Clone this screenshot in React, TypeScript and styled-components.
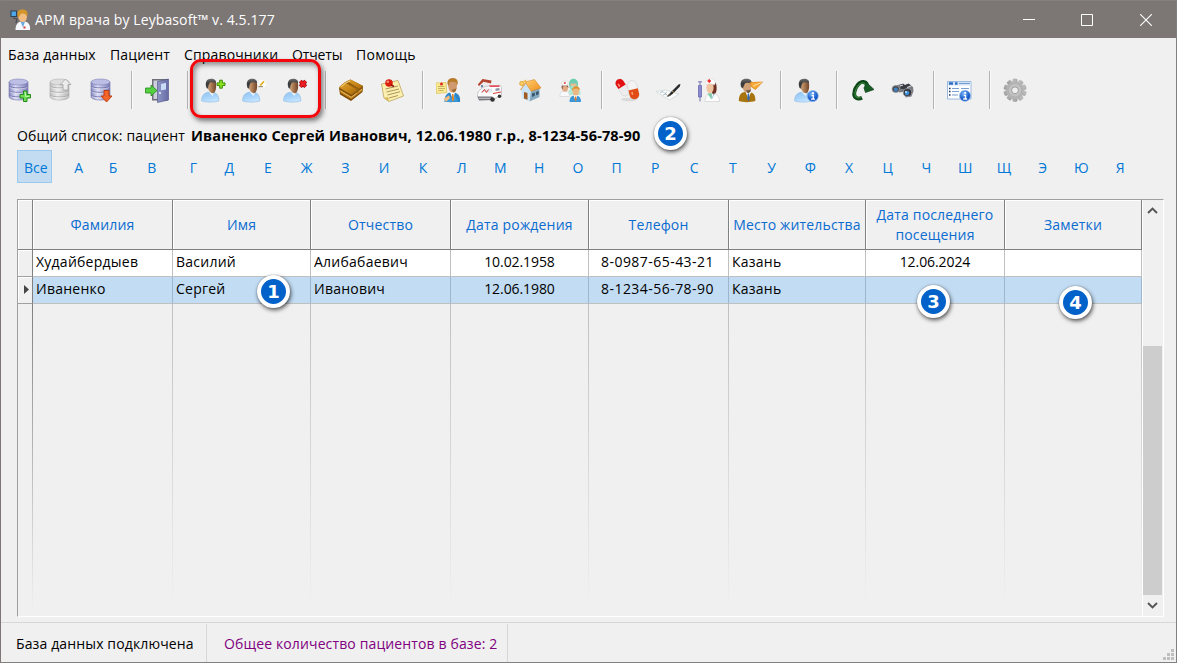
import React from 'react';
import styled, { createGlobalStyle } from 'styled-components';

const GlobalStyle = createGlobalStyle`
  * { box-sizing: border-box; }
  body {
    margin: 0;
    background: #f0f0f0;
    font: 14px/20px "Open Sans", "Noto Sans", sans-serif;
    letter-spacing: 0.16px;
    color: #000;
  }
`;

/* ---------- window frame ---------- */

const Window = styled.div`
  position: relative;
  display: flex;
  flex-direction: column;
  width: 1177px;
  height: 663px;
  overflow: hidden;
  background: #f0f0f0;
  border: 1px solid #838080;
  border-left-color: #7c7675;
`;

const TitleBar = styled.header`
  display: flex;
  align-items: center;
  flex: none;
  height: 37px;
  margin: 0 -1px;
  padding-left: 10px;
  background: #7c7675;
  color: #fff;
`;

const Title = styled.h1`
  flex: 1;
  margin: 0 0 0 3px;
  font-size: 14px;
  font-weight: 400;
  letter-spacing: 0.1px;
`;

const Caption = styled.button`
  display: grid;
  place-items: center;
  width: 58px;
  height: 36px;
  padding: 0;
  border: 0;
  background: none;
  color: #fff;

  &:last-child { padding-left: 2px; }
`;

const Captions = styled.div`
  display: flex;
  margin-right: 3px;
`;

const MenuBar = styled.nav`
  display: flex;
  flex: none;
  height: 33px;
  padding: 7px 0 0 7px;
`;

const MenuItem = styled.span<{ $width: number; $spacing?: number }>`
  width: ${p => p.$width}px;
  white-space: nowrap;
  letter-spacing: ${p => p.$spacing ?? 0.15}px;
`;

/* ---------- toolbar ---------- */

const Toolbar = styled.div`
  display: flex;
  flex: none;
  align-items: center;
  height: 38px;
  margin-left: -2px;
`;

const ToolButton = styled.button`
  flex: none;
  width: 41px;
  height: 38px;
  padding: 1px 0 0 8px;
  border: 0;
  background: none;
  text-align: left;

  svg { display: block; }
`;

const Divider = styled.i`
  flex: none;
  width: 2px;
  height: 38px;
  margin: 0 4px 0 9px;
  border-left: 1px solid #b4b4b4;
  border-right: 1px solid #fbfbfb;
`;

/* ---------- patient line and alphabet ---------- */

const Summary = styled.p`
  display: flex;
  flex: none;
  height: 41px;
  margin: 0;
  padding: 17px 0 0 16px;
  white-space: pre;
`;

const SummaryLabel = styled.span`
  width: 174px;
`;

const SummaryName = styled.b`
  font-size: 14.5px;
  letter-spacing: 0.13px;
`;

const Alphabet = styled.div`
  display: flex;
  flex: none;
  height: 33px;
  margin-left: 16px;
  color: #0078d7;
`;

const AllLetters = styled.span`
  width: 35px;
  margin-right: 3px;
  padding-left: 6px;
  line-height: 33px;
  border: 1px solid #99c9ef;
  background: #c4dcf2;
  letter-spacing: 0;
`;

const Letter = styled.span<{ $shift?: number }>`
  width: 38.74px;
  padding-left: ${p => p.$shift ?? 0}px;
  line-height: 35px;
  text-align: center;
`;

/* ---------- grid ---------- */

const GridFrame = styled.section`
  display: flex;
  flex: none;
  width: 1147px;
  height: 418px;
  margin: 16px 0 0 16px;
  border: 1px solid #fff;
  border-top-color: #a0a0a0;
  border-left-color: #a0a0a0;
`;

const Sheet = styled.div`
  display: grid;
  flex: none;
  grid-template-columns: 15px 140px 138px 140px 138px 140px 137px 139px 137px;
  grid-template-rows: 50px 27px 27px 1fr;
  width: 1124px;
`;

const HeadCell = styled.div`
  display: flex;
  align-items: center;
  justify-content: center;
  border-right: 1px solid #808080;
  border-bottom: 1px solid #808080;
  box-shadow: inset 1px 1px 0 #fff;
  color: #0a6cd0;
  text-align: center;
  white-space: pre;
  letter-spacing: 0.17px;
  padding-top: 1px;
`;

const RowMark = styled.div`
  display: flex;
  align-items: center;
  justify-content: flex-end;
  padding: 0 3px 1px 0;
  border-right: 1px solid #808080;
  border-bottom: 1px solid #a0a0a0;
  box-shadow: inset 1px 1px 0 #fff;
`;

const Cell = styled.div<{ $selected?: boolean; $center?: boolean }>`
  padding: 2px 0 0 ${p => (p.$center ? 0 : 3)}px;
  text-align: ${p => (p.$center ? 'center' : 'left')};
  white-space: nowrap;
  letter-spacing: 0.24px;
  background: ${p => (p.$selected ? '#c2dcf3' : '#fff')};
  border-right: 1px solid ${p => (p.$selected ? '#9db6cc' : '#c0c0c0')};
  border-bottom: 1px solid #c0c0c0;
`;

const Phone = styled.span`
  margin-right: 2px;
  letter-spacing: 0.46px;
`;

const DateText = styled.span`
  letter-spacing: -0.08px;
`;

const Tail = styled.div<{ $mark?: boolean }>`
  background: linear-gradient(${p => (p.$mark ? '#808080' : '#c0c0c0')}, #f0f0f0 98%) right / 1px 100% no-repeat;
`;

const ScrollBar = styled.div`
  display: flex;
  flex-direction: column;
  align-items: center;
  width: 21px;
  border-left: 1px solid #fff;
  padding-right: 1px;
`;

const ScrollArrow = styled.button<{ $height: number }>`
  display: grid;
  place-items: center;
  flex: none;
  width: 19px;
  height: ${p => p.$height}px;
  padding: 1px 0 0;
  border: 0;
  background: none;
`;

const ScrollTrack = styled.div`
  flex: 1;
  display: flex;
  flex-direction: column;
  justify-content: flex-end;
  width: 19px;
`;

const ScrollThumb = styled.div`
  height: 249px;
  background: #cdcdcd;
`;

/* ---------- status bar ---------- */

const StatusBar = styled.footer`
  display: flex;
  flex: none;
  height: 40px;
  margin-top: 5px;
  padding-top: 1px;
  border-top: 1px solid #d7d7d7;
`;

const StatusPanel = styled.div<{ $width: number; $indent: number; $color?: string }>`
  width: ${p => p.$width}px;
  padding-left: ${p => p.$indent}px;
  border-right: 1px solid #d7d7d7;
  line-height: 39px;
  white-space: nowrap;
  letter-spacing: 0.13px;
  color: ${p => p.$color ?? '#000'};
`;

const Grip = styled.svg`
  margin: 25px 2px 0 auto;
`;

/* ---------- annotations over the window ---------- */

const Highlight = styled.div`
  position: absolute;
  left: 189px;
  top: 58px;
  width: 131px;
  height: 59px;
  border: 3px solid #f4070c;
  border-radius: 11px;
  box-shadow: 2px 3px 5px rgba(0, 0, 0, 0.5), inset 2px 3px 5px rgba(0, 0, 0, 0.4);
`;

const Marker = styled.span<{ $x: number; $y: number }>`
  position: absolute;
  left: ${p => p.$x - 18}px;
  top: ${p => p.$y - 18}px;
  width: 33px;
  height: 33px;
  border: 4px solid #fff;
  border-radius: 50%;
  background: #0262c9;
  box-shadow: 1px 2px 4px rgba(0, 0, 0, 0.65), 0 0 1px rgba(0, 0, 0, 0.5);
  color: #fff;
  font: bold 18px/25px "DejaVu Sans", sans-serif;
  letter-spacing: 0;
  text-align: center;
`;

/* ---------- icons ---------- */

const Icon = ({ children }: { children: React.ReactNode }) => (
  <svg width="25" height="25" viewBox="0 0 25 25" fill="none">{children}</svg>
);

const Definitions = styled.svg`
  position: absolute;
  width: 0;
  height: 0;
`;

const Gradients = () => (
  <Definitions>
    <defs>
      <linearGradient id="db"><stop stopColor="#8587c0" /><stop offset=".35" stopColor="#dcddf6" /><stop offset="1" stopColor="#797bb5" /></linearGradient>
      <linearGradient id="dbGray"><stop stopColor="#bdbdbd" /><stop offset=".4" stopColor="#ededed" /><stop offset="1" stopColor="#b2b2b2" /></linearGradient>
      <linearGradient id="coat" x1="0" y1="0" x2="0.400" y2="1"><stop stopColor="#8fc3f0" /><stop offset=".6" stopColor="#a9d4fa" /><stop offset="1" stopColor="#c4e4ff" /></linearGradient>
      <linearGradient id="face"><stop stopColor="#dcb38c" /><stop offset=".5" stopColor="#a87850" /><stop offset="1" stopColor="#70452a" /></linearGradient>
      <linearGradient id="hair" x1="0" y1="0" x2="0" y2="1"><stop stopColor="#6d6d6d" /><stop offset=".5" stopColor="#383838" /><stop offset="1" stopColor="#4a4a4a" /></linearGradient>
      <linearGradient id="door"><stop stopColor="#8f96c6" /><stop offset="1" stopColor="#666ca4" /></linearGradient>
      <linearGradient id="gold" x1="0" y1="0" x2="1" y2="1"><stop stopColor="#e6ae3e" /><stop offset=".5" stopColor="#c98717" /><stop offset="1" stopColor="#8f5707" /></linearGradient>
      <linearGradient id="roof" x1="0" y1="0" x2="1" y2="1"><stop stopColor="#ffcf70" /><stop offset="1" stopColor="#ee8e1c" /></linearGradient>
      <radialGradient id="info" cx=".4" cy=".3"><stop stopColor="#7db8fa" /><stop offset="1" stopColor="#1759c8" /></radialGradient>
      <linearGradient id="steel" x1="0" y1="0" x2="1" y2="1"><stop stopColor="#c4c4c4" /><stop offset="1" stopColor="#9c9c9c" /></linearGradient>
    </defs>
  </Definitions>
);

const Cylinder = ({ gray }: { gray?: boolean }) => {
  const line = gray ? '#a9a9a9' : '#7072a8';
  return (
    <>
      <path d="M2 4v14.500c0 2.300 4.200 3.500 9.500 3.500s9.500-1.200 9.500-3.500V4z" fill={gray ? 'url(#dbGray)' : 'url(#db)'} stroke={line} strokeWidth=".6" />
      <path d="M2 8c1.500 2.500 17.500 2.500 19 0M2 12.500c1.500 2.500 17.500 2.500 19 0M2 17c1.500 2.500 17.500 2.500 19 0" stroke={line} strokeWidth=".9" />
      <path d="M2.500 9.200c2 2.200 16 2.200 18 0M2.500 13.700c2 2.200 16 2.200 18 0M2.500 18.200c2 2.200 16 2.200 18 0" stroke="#fff" strokeOpacity=".5" strokeWidth=".8" />
      <ellipse cx="11.500" cy="4" rx="9.500" ry="3" fill={gray ? '#dedede' : '#bcbee6'} stroke={line} strokeWidth=".5" />
    </>
  );
};

const DbAddIcon = () => (
  <Icon>
    <Cylinder />
    <path d="M16.500 13h3.500v3.500h3.500V20H20v3.500h-3.500V20H13v-3.500h3.500z" fill="#6fdc55" stroke="#22891b" strokeWidth="1" />
    <path d="M17.500 14.500h1v4h4" stroke="#cbffba" strokeWidth=".8" />
  </Icon>
);

const DbUploadIcon = () => (
  <Icon>
    <Cylinder gray />
    <path d="M17.500 1l5.500 5.500h-3V12h-5V6.500h-3z" fill="#ececec" stroke="#a9a9a9" strokeWidth=".9" />
  </Icon>
);

const DbDownloadIcon = () => (
  <Icon>
    <Cylinder />
    <path d="M15 12.500h5V18h3l-5.500 6L12 18h3z" fill="#f4652a" stroke="#bb3508" strokeWidth=".9" />
  </Icon>
);

const DoorIcon = () => (
  <Icon>
    <path d="M7 1h16v21.500H7z" fill="#6e6f78" />
    <path d="M8.500 2.500H20v18.500H8.500z" fill="#cdd0dc" />
    <path d="M12.500 3.500L23.500 1v21l-11 2.500z" fill="url(#door)" stroke="#4b5080" strokeWidth=".6" />
    <path d="M16 6l5-1.200v6.700l-5 .800z" fill="#c9dcf6" />
    <circle cx="15" cy="15" r="1.100" fill="#e8edf8" />
    <path d="M.5 10h5.500V7l6 5.500-6 5.500v-3H.5z" fill="#55d040" stroke="#26881d" strokeWidth=".8" />
  </Icon>
);

const Person = () => (
  <>
    <path d="M.6 23c0-5.500 2.400-8 6.400-8.800l4 1.300 2.500-.8c3 1 4.500 4 4.300 8.300-4.500 1.500-12.500 1.500-17.200 0z" fill="url(#coat)" stroke="#7fb2e0" strokeWidth=".5" />
    <path d="M8 14.500l3.500 3.500 1.500-3z" fill="#e9f4fe" />
    <path d="M6 5c1-3 8.500-3.500 9 .5.500 4.500-.5 9.500-3 9.700C8.500 15.200 5.500 10 6 5z" fill="url(#face)" />
    <path d="M5.500 10C3.500 4 6 .8 10.200.8c3.300 0 5.300 1.700 4.800 4.200-2.500-.8-4.800-.8-6.200-.2-1 1.200-1.600 3.200-1.600 6z" fill="url(#hair)" />
  </>
);

const PersonAddIcon = () => (
  <Icon>
    <Person />
    <path d="M18.700 2.200h2.600v2.700H24v2.600h-2.700v2.700h-2.600V7.500H16V4.900h2.700z" fill="#8be71c" stroke="#3c8a0b" strokeWidth="1" />
  </Icon>
);

const PersonEditIcon = () => (
  <Icon>
    <Person />
    <circle cx="20" cy="6" r="4.300" fill="#fbfbf8" />
    <path d="M18.200 7.500L22 3.200" stroke="#e8ad28" strokeWidth="1.700" />
    <path d="M16.500 8.700h4.500" stroke="#77664a" strokeWidth=".9" />
  </Icon>
);

const PersonDeleteIcon = () => (
  <Icon>
    <Person />
    <path d="M17.300 3.200l5.400 5.400M22.700 3.200l-5.400 5.400" stroke="#8d0b0b" strokeWidth="4" />
    <path d="M17.300 3.200l5.400 5.400M22.700 3.200l-5.400 5.400" stroke="#ed1c24" strokeWidth="2.600" />
  </Icon>
);

const BookIcon = () => (
  <Icon>
    <path d="M0 9.500Q5 4 11.500 1.500L24 8l-.5 6L12 23 1 16.500z" fill="#7b4a06" />
    <path d="M0 9.500Q5 4 11.500 1.500L24 8 12.500 17z" fill="url(#gold)" />
    <path d="M1 11.500l11.300 7L23.500 10v2.700l-11.300 8.600L1.500 15z" fill="#b97a17" />
    <path d="M1.500 13l10.700 6.300L23 11.200" stroke="#efc873" strokeWidth=".8" />
    <path d="M6.500 5l11 6.200v4.300l2.200-1.700v-3.500L9 3.500z" fill="#96600d" />
    <path d="M2.500 8.500Q6 5 11 3" stroke="#f8d88b" strokeWidth="1" />
  </Icon>
);

const NoteIcon = () => (
  <Icon>
    <path d="M1.500 6L18 2.500 23.500 18 9 23.500 4 20z" fill="#fbf0ae" stroke="#b39a4b" strokeWidth=".7" />
    <path d="M5.500 11l12.500-3M6.500 14l12.500-3M7.500 17l12.500-3.300M9 20l9-2.500" stroke="#a08b50" strokeWidth=".9" />
    <path d="M4 20l4-1 1 4.500z" fill="#d7b75b" />
    <circle cx="9" cy="5" r="3.800" fill="#d9200f" />
    <circle cx="7.800" cy="3.700" r="1.300" fill="#fa8b78" />
    <path d="M11 7l3 1.500" stroke="#8d1108" strokeWidth="1.400" />
  </Icon>
);

const DoctorNoteIcon = () => (
  <Icon>
    <path d="M8.500 24c0-6 2-9 6-9.500h4c4 1 6 4 5.500 9.500z" fill="#2b86c9" />
    <path d="M9 23.500l3-7 4.500 5-1 3zM22 24l-3-7-2.500 6z" fill="#3f9cdb" />
    <path d="M14 14h5l-2 8z" fill="#fff" />
    <path d="M16 16h1.500l.6 5-1.300 3-1-3z" fill="#e4862a" />
    <path d="M12 5c0-4 9-4 9 0 .5 5-1.500 9.500-4.500 9.500S12 10 12 5z" fill="#cf9a70" />
    <path d="M11.500 6C11 2 13.500 0 17 0c4 0 5.500 3 4.500 7-1-3-4-4-7.500-3-.5 1-1 2-1 4z" fill="#b87d2c" />
    <path d="M16 11.500c2 0 4-.5 4.500-2 0 3-1.500 5-3.500 5z" fill="#9c692e" />
    <path d="M0 5l10-.5.800 10L.500 15.500z" fill="#fbec92" stroke="#d5b746" strokeWidth=".6" />
    <path d="M2 8.500h6.500M2 10.500h7M2.500 12.500h5" stroke="#b09a55" strokeWidth=".7" />
    <circle cx="5.500" cy="6" r="1.500" fill="#df2a1f" />
    <path d="M8 20.500l5-3 1 2.500-4 4z" fill="#f0bb7d" />
  </Icon>
);

const AmbulanceIcon = () => (
  <Icon>
    <path d="M2 5.500L6 1l7 2-1.500 7L3 10.500z" fill="#eeebea" />
    <path d="M.8 6.500L5.500 1l9 1.500-.5 3L6.500 3.800 2 8z" fill="#b4442f" />
    <path d="M4 7h2v2.500H4z" fill="#7289a8" />
    <path d="M1 14l4.500-4.500L11 8l12-.5c1 0 1.500 1.500 1.500 3.500v6.500L16 21.500 2 20.500.5 18z" fill="#fdfdfd" stroke="#b5b5ba" strokeWidth=".7" />
    <path d="M.5 18.500h15V22L2 22.500z" fill="#77777f" />
    <path d="M2 20.300h12" stroke="#c8c8cc" strokeWidth="1" />
    <path d="M5.500 10.500H15l1 4H3.500z" fill="#e3e8ee" />
    <path d="M5 14.500l2.500-3 2 3 2-3M16 15.500l8-1.500" stroke="#d63631" strokeWidth="1" />
    <path d="M12 7.500h10.500v1.200H13z" fill="#e51b2d" />
    <path d="M18.500 10.500l4-.5v2.500l-4 .5z" fill="#8c97a4" />
    <circle cx="15.500" cy="21.500" r="2.300" fill="#333" /><circle cx="22.500" cy="18.200" r="1.800" fill="#333" />
  </Icon>
);

const HouseIcon = () => (
  <Icon>
    <path d="M12 13l9.500-3.500V19l-10 4.500z" fill="#87a9c0" />
    <path d="M3 11l5-7 5 9-1.500 10.500-7-3z" fill="#cbe4f5" />
    <path d="M7 4l9.500-2.500L23 10l-9.800 3.200z" fill="url(#roof)" stroke="#cd7c18" strokeWidth=".5" />
    <path d="M8 4.500L2.500 12" stroke="#e0a458" strokeWidth="1.200" />
    <path d="M6 14l3.500 1v6.800L6 20.500z" fill="#a05c22" />
    <path d="M14 15.500l2.800-1v3.300L14 19zM18 14l2.700-1v3.300l-2.700 1z" fill="#37566e" />
    <circle cx="3.800" cy="5.500" r="2.200" fill="#f8cc62" stroke="#d59c28" strokeWidth=".7" />
    <path d="M5 3l3.500-1.500L7.500 5z" fill="#f4ba43" />
  </Icon>
);

const StaffIcon = () => (
  <Icon>
    <path d="M9.500 13c1-3 11-3 12 1v3h-12z" fill="#b6e8d6" />
    <path d="M10 6c0-7 9-7 9 0 0 3-1.500 6-4.500 6S10 9 10 6z" fill="#6dcdb0" />
    <path d="M11.500 5.500h6V8h-6z" fill="#e5bd97" />
    <path d="M11.500 8h6c0 2-1 3.500-3 3.500S11.500 10 11.500 8z" fill="#a3e6d0" />
    <path d="M.8 18.500c0-4 2-5.500 5-5.500s4.700 1.500 4.700 5.500z" fill="#f7f9fb" stroke="#c9ced4" strokeWidth=".6" />
    <ellipse cx="6" cy="9.500" rx="3" ry="4.300" fill="#e1aa84" />
    <path d="M2.500 10c-.5-6 7-6 7 0C8 7.500 5 7.500 4 8.500l-.5 3z" fill="#8e6048" />
    <path d="M2.500 4.500c1.500-2 5-2 6.500 0L8.500 7.500h-5z" fill="#fff" stroke="#c8c8c8" strokeWidth=".5" />
    <path d="M4.800 5h2" stroke="#df282f" strokeWidth="1.500" />
    <path d="M10.500 24c0-4 1.500-6.500 5.500-6.500 4.500 0 6 2.500 6 6.500z" fill="#3c97d8" />
    <path d="M14.500 17h4l-2 6z" fill="#fff" /><path d="M16 18.500h1.200l.4 3-1 2-.9-2z" fill="#df7a28" />
    <ellipse cx="16.800" cy="13" rx="3.200" ry="4.500" fill="#ebb883" />
    <path d="M13 13c-.5-6 8-6.500 8-.500-2-2.500-5-2.500-6.500-1.500z" fill="#e0902c" />
  </Icon>
);

const PillsIcon = () => (
  <Icon>
    <ellipse cx="14" cy="21.500" rx="8" ry="1.800" fill="#ccc" opacity=".6" />
    <g transform="rotate(-32 5 6)">
      <rect x="1" y="1" width="8.500" height="18.500" rx="4.250" fill="#ededed" stroke="#cfcfcf" strokeWidth=".5" />
      <path d="M1 9.500V5.200a4.250 4.250 0 018.500 0v4.300z" fill="#e31212" />
      <path d="M3.500 8V5" stroke="#ff8f85" strokeWidth="1.500" />
    </g>
    <g transform="rotate(-14 18 12)">
      <rect x="13.500" y="2.500" width="9.500" height="19" rx="4.750" fill="#f3f3f3" stroke="#ccc" strokeWidth=".5" />
      <path d="M13.500 11.500H23v5.200a4.750 4.750 0 01-9.500 0z" fill="#e24b13" />
      <path d="M16.500 13.500v3" stroke="#ff9f73" strokeWidth="1.500" />
    </g>
  </Icon>
);

const PenIcon = () => (
  <Icon>
    <path d="M0 13.500l9-1.500 14 4-9.500 6z" fill="#fff" stroke="#bcd0cc" strokeWidth=".6" />
    <path d="M4 14.500l3-1 2 2 2-1M7 17l3-1 2 2.500 3-1.500" stroke="#8aa3b0" strokeWidth=".7" />
    <path d="M11.500 18.500l3-4 8-8 2-.5-.8 2.800-7.700 7.700z" fill="#292b2d" />
    <path d="M10.500 19l2.800-3.500 1.700 1.700z" fill="#57503c" />
    <path d="M16 13l2.300 1.700" stroke="#bfa05c" strokeWidth=".9" />
  </Icon>
);

const NurseIcon = () => (
  <Icon>
    <path d="M1.500 7.500h3v11.500h-3z" fill="#8a8ad0" stroke="#5f5fa8" strokeWidth=".7" />
    <path d="M3 4v3M1 3.800h4M3 19v4.500" stroke="#7474ae" strokeWidth="1" />
    <path d="M8 23.500c0-5 2.500-8 7-8s7.500 2.500 7.500 8z" fill="#fdfdfd" stroke="#c9c9c9" strokeWidth=".6" />
    <path d="M10.500 15.500h4.500l-.5 6z" fill="#77ce92" />
    <path d="M10 7c0-6 9-6 9.500 1 .3 4 .3 8-3.500 8.500-1-3-3-5-2-9z" fill="#6e3020" />
    <ellipse cx="13" cy="9.500" rx="3.600" ry="5.700" fill="#f2c5a2" />
    <path d="M8.500 4C9.500-.5 17-.5 18.500 4L17.500 7c-3-1.500-5-1.500-8-.5z" fill="#fff" stroke="#d4d4d4" strokeWidth=".5" />
    <path d="M10.500 3h3.500M12.250 1.200v3.600" stroke="#ea2323" strokeWidth="1.500" />
    <path d="M13 15.500l2 5 2.500-5.500" stroke="#8bbddb" strokeWidth=".8" />
  </Icon>
);

const HeraldIcon = () => (
  <Icon>
    <path d="M.8 23c0-6 2-8.500 6-9h5c4 1 6 3.500 5.500 9-5 1.500-12 1.500-16.500 0z" fill="#a8740f" />
    <path d="M7.500 14l3 7 2.500-7z" fill="#fff" />
    <path d="M9.700 15.500h1.400l.7 5-1.400 3-1.200-3z" fill="#356ab4" />
    <path d="M4.500 7c0-6 8.500-6 8.500 0s-1.500 7.500-4 7.500S4.500 12 4.500 7z" fill="#cf9f76" />
    <path d="M3 9C1.500 3 4.500.8 8 .8c4.500 0 6 2 5.500 4.700-3-1-5-1-6.500-.2L4.800 10.500z" fill="url(#hair)" />
    <path d="M8 12c2 .7 4 .2 5-1 0 3-2 4.500-3.500 4z" fill="#6d543f" />
    <path d="M12 4.500l12.500-.500-7 7.500-4-2.500z" fill="#f7a836" stroke="#dc8413" strokeWidth=".7" />
    <path d="M23.500 4.500L15 8" stroke="#ffdd9c" strokeWidth="1" />
  </Icon>
);

const InfoBall = ({ cx, cy }: { cx: number; cy: number }) => (
  <>
    <circle cx={cx} cy={cy} r="5.500" fill="url(#info)" stroke="#8cb8ea" strokeWidth=".7" />
    <path d={`M${cx - 1.300} ${cy - 0.500}h1.800v3.500M${cx - 1.800} ${cy + 3.200}h4`} stroke="#fff" strokeWidth="1.300" />
    <circle cx={cx + 0.200} cy={cy - 2.900} r="1.100" fill="#fff" />
  </>
);

const PersonInfoIcon = () => <Icon><Person /><InfoBall cx={18.800} cy={18} /></Icon>;

const RefreshIcon = () => (
  <Icon>
    <path d="M12 19.800c-4.500 2.200-8.500-.3-7.700-5.300C5 9 9.500 3.500 13.500 4c3.200.4 4 3 3.800 6.500" stroke="#0d4517" strokeWidth="3.800" />
    <path d="M11 19.500c-4 1.200-6.500-.8-6-4.800C5.700 9.500 9.800 4.500 13 4.800c2.400.3 3.200 2.200 3.200 4.700" stroke="#35803a" strokeWidth="1.200" />
    <path d="M16.500 4.500l7.500 7-8.500 3-1.500-4.500z" fill="#175c25" stroke="#0c3b15" strokeWidth=".7" />
  </Icon>
);

const BinocularsIcon = () => (
  <Icon>
    <path d="M2 8.500l8-2.500 3 1.500 5-1.500 4 3 .5 4-2 5.500-6 1-1-6-5 1z" fill="#7a7b80" />
    <path d="M10 6.500l2-1 2 1.500 3.500-1.500 2.500 2-6 4-5-1z" fill="#3a3b40" />
    <path d="M9 8l3-1M16 9.500l4-1.500" stroke="#d6d7dc" strokeWidth="1.200" />
    <ellipse cx="4.800" cy="11" rx="3.800" ry="3.500" fill="#4a4b50" stroke="#a0a2a8" strokeWidth=".8" />
    <circle cx="4.800" cy="11.500" r="1.900" fill="#3b83c9" />
    <ellipse cx="16.500" cy="14.500" rx="4.300" ry="3.900" fill="#35363b" stroke="#a0a2a8" strokeWidth=".8" />
    <ellipse cx="16" cy="15" rx="2.300" ry="2.200" fill="#3c8dd9" />
    <circle cx="15" cy="14" r=".9" fill="#d2e9ff" />
  </Icon>
);

const ReportIcon = () => (
  <Icon>
    <path d="M.5 3.500h23.500v17.500H.5z" fill="#fdfeff" stroke="#83a8d7" strokeWidth=".8" />
    <path d="M1 4h23v3.500H1z" fill="#d3e3f7" />
    <path d="M2 5.500h4M8 5.500h2.500" stroke="#2c6ec4" strokeWidth="2.500" />
    <path d="M12 5.500h11M5 10.500h7M14 10.500h8M5 13.500h7M14 13.500h6M5 17h6" stroke="#6a93cb" strokeWidth=".9" />
    <path d="M2 10.500h1.500M2 13.500h1.500M2 17h1.500" stroke="#1d3255" strokeWidth="1.600" />
    <InfoBall cx={18} cy={17.800} />
  </Icon>
);

const GearIcon = () => (
  <Icon>
    {[0, 36, 72, 108, 144].map(angle => (
      <rect key={angle} x="9.800" y="1" width="4.400" height="22.500" rx="1" fill="url(#steel)" stroke="#a3a3a3" strokeWidth=".5" transform={`rotate(${angle} 12 12.300)`} />
    ))}
    <circle cx="12" cy="12.300" r="8.700" fill="#b4b4b4" />
    <circle cx="12" cy="12.300" r="6.700" fill="#c2c2c2" stroke="#aaa" strokeWidth=".6" />
    <circle cx="12" cy="12.300" r="3.400" fill="#efefef" stroke="#a0a0a0" strokeWidth="1" />
  </Icon>
);

const AppIcon = () => (
  <svg width="22" height="22" viewBox="0 0 22 22" fill="none">
    <path d="M1 2h5.500v5.500H1z" fill="#4fa8e8" stroke="#2a4258" strokeWidth="1.100" />
    <path d="M3 9l4 1-1 4" stroke="#4a4a50" strokeWidth="1.200" />
    <path d="M5.500 21c0-5 2-8 6-8.500h3.500c4 1 5.500 4 5 8.500z" fill="#f5f8fc" />
    <path d="M10.500 12.500h4.500l-2 6z" fill="#69a9e0" />
    <path d="M8 6c0-6 9-6 9 0s-2 7-4.500 7S8 10 8 6z" fill="#f2bc82" />
    <path d="M7.500 6.500C7 2 9 .5 12.500.5c4 0 6 2.500 4.500 7-1.500-3-4-3.500-6-2.500L8.500 8.500z" fill="#d3962a" />
    <path d="M13.500 17.500h2v2h-2z" fill="#dc3636" />
  </svg>
);

/* ---------- data ---------- */

const toolGroups = [
  [DbAddIcon, DbUploadIcon, DbDownloadIcon],
  [DoorIcon],
  [PersonAddIcon, PersonEditIcon, PersonDeleteIcon],
  [BookIcon, NoteIcon],
  [DoctorNoteIcon, AmbulanceIcon, HouseIcon, StaffIcon],
  [PillsIcon, PenIcon, NurseIcon, HeraldIcon],
  [PersonInfoIcon],
  [RefreshIcon, BinocularsIcon],
  [ReportIcon],
  [GearIcon],
];

const letters = 'АБВГДЕЖЗИКЛМНОПРСТУФХЦЧШЩЭЮЯ'.split('');
const letterShift: Record<string, number> = { А: 9, Г: 6 };

const columns = ['Фамилия', 'Имя', 'Отчество', 'Дата рождения', 'Телефон', 'Место жительства', 'Дата последнего\nпосещения', 'Заметки'];

const patients = [
  { last: 'Худайбердыев', first: 'Василий', middle: 'Алибабаевич', born: '10.02.1958', phone: '8-0987-65-43-21', city: 'Казань', visit: '12.06.2024', notes: '' },
  { last: 'Иваненко', first: 'Сергей', middle: 'Иванович', born: '12.06.1980', phone: '8-1234-56-78-90', city: 'Казань', visit: '', notes: '', selected: true },
];

const markers = [
  { n: 1, x: 274, y: 292 },
  { n: 2, x: 671, y: 134 },
  { n: 3, x: 934, y: 302 },
  { n: 4, x: 1076, y: 303 },
];

export default function App() {
  return (
    <Window>
      <GlobalStyle />
      <Gradients />
      <TitleBar>
        <AppIcon />
        <Title>АРМ врача by Leybasoft™ v. 4.5.177</Title>
        <Captions>
          <Caption><svg width="12" height="12"><path d="M0 5.500h12" stroke="currentColor" /></svg></Caption>
          <Caption><svg width="12" height="12"><path d="M.5.500h11v11H.5z" fill="none" stroke="currentColor" /></svg></Caption>
          <Caption><svg width="12" height="12"><path d="M0 0l12 12M12 0L0 12" stroke="currentColor" strokeWidth="1.100" /></svg></Caption>
        </Captions>
      </TitleBar>

      <MenuBar>
        <MenuItem $width={102}>База данных</MenuItem>
        <MenuItem $width={74}>Пациент</MenuItem>
        <MenuItem $width={108}>Справочники</MenuItem>
        <MenuItem $width={64} $spacing={-0.15}>Отчеты</MenuItem>
        <MenuItem $width={64} $spacing={0.3}>Помощь</MenuItem>
      </MenuBar>

      <Toolbar>
        {toolGroups.map((group, g) => (
          <React.Fragment key={g}>
            {g > 0 && <Divider />}
            {group.map((Tool, i) => <ToolButton key={i}><Tool /></ToolButton>)}
          </React.Fragment>
        ))}
      </Toolbar>

      <Summary>
        <SummaryLabel>Общий список: пациент</SummaryLabel>
        <SummaryName>Иваненко Сергей Иванович, 12.06.1980 г.р., 8-1234-56-78-90</SummaryName>
      </Summary>

      <Alphabet>
        <AllLetters>Все</AllLetters>
        {letters.map(l => <Letter key={l} $shift={letterShift[l]}>{l}</Letter>)}
      </Alphabet>

      <GridFrame>
        <Sheet>
          <HeadCell />
          {columns.map(c => <HeadCell key={c}>{c}</HeadCell>)}
          {patients.map(p => (
            <React.Fragment key={p.last}>
              <RowMark>
                {p.selected && <svg width="5" height="9"><path d="M0 0l5 4.500L0 9z" fill="#444" /></svg>}
              </RowMark>
              <Cell $selected={p.selected}>{p.last}</Cell>
              <Cell $selected={p.selected}>{p.first}</Cell>
              <Cell $selected={p.selected}>{p.middle}</Cell>
              <Cell $selected={p.selected} $center><DateText>{p.born}</DateText></Cell>
              <Cell $selected={p.selected} $center><Phone>{p.phone}</Phone></Cell>
              <Cell $selected={p.selected}>{p.city}</Cell>
              <Cell $selected={p.selected} $center><DateText>{p.visit}</DateText></Cell>
              <Cell $selected={p.selected}>{p.notes}</Cell>
            </React.Fragment>
          ))}
          <Tail $mark />
          {columns.map(c => <Tail key={c} />)}
        </Sheet>
        <ScrollBar>
          <ScrollArrow $height={20}><svg width="11" height="7"><path d="M1 6l4.500-4.500L10 6" fill="none" stroke="#555" strokeWidth="1.900" /></svg></ScrollArrow>
          <ScrollTrack><ScrollThumb /></ScrollTrack>
          <ScrollArrow $height={21}><svg width="11" height="8"><path d="M1 1l4.500 4.500L10 1" fill="none" stroke="#555" strokeWidth="1.900" /></svg></ScrollArrow>
        </ScrollBar>
      </GridFrame>

      <StatusBar>
        <StatusPanel $width={206} $indent={15}>База данных подключена</StatusPanel>
        <StatusPanel $width={301} $indent={17} $color="#800080">Общее количество пациентов в базе: 2</StatusPanel>
        <Grip width="11" height="11" fill="#bfbfbf">
          <path d="M8 0h3v3H8zM4 4h3v3H4zM8 4h3v3H8zM0 8h3v3H0zM4 8h3v3H4zM8 8h3v3H8z" />
        </Grip>
      </StatusBar>

      <Highlight />
      {markers.map(m => <Marker key={m.n} $x={m.x} $y={m.y}>{m.n}</Marker>)}
    </Window>
  );
}
